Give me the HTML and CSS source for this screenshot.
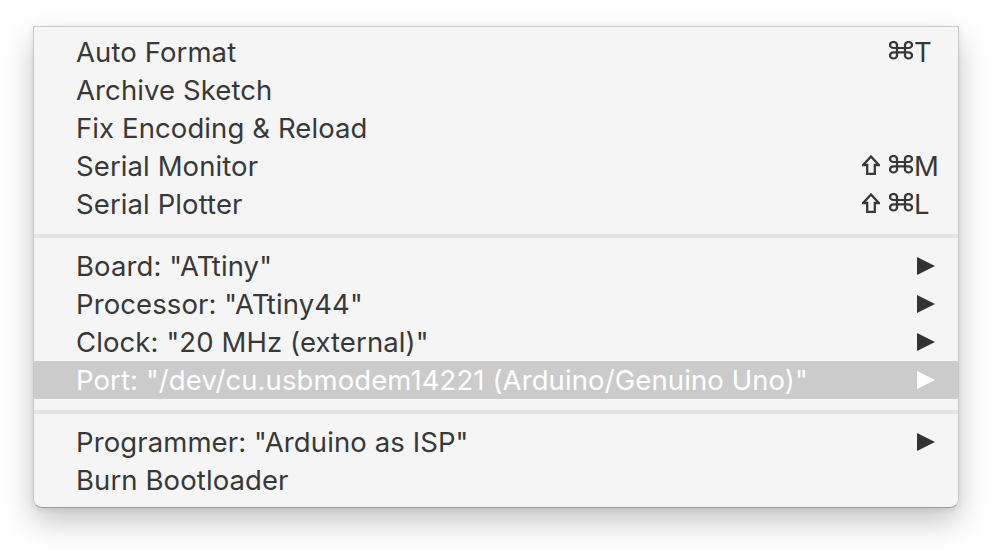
FILE: index.html
```html
<!DOCTYPE html>
<html>
<head>
<meta charset="utf-8">
<link rel="stylesheet" href="styles.css">
</head>
<body>
<div class="menu">
  <div class="group">
    <div class="item"><span class="label">Auto Format</span>
      <span class="key"><span class="mods"><svg class="cmd" viewBox="0 0 24 24" width="24" height="21" preserveAspectRatio="none"><path d="M8 8 V4.5 A3.5 3.5 0 1 0 4.5 8 H19.5 A3.5 3.5 0 1 0 16 4.5 V16.5 A3.5 3.5 0 1 0 19.5 13 H4.5 A3.5 3.5 0 1 0 8 16.5 Z" fill="none" stroke="currentColor" stroke-width="2.3"/></svg></span><span class="char">T</span></span></div>
    <div class="item"><span class="label">Archive Sketch</span></div>
    <div class="item"><span class="label">Fix Encoding &amp; Reload</span></div>
    <div class="item"><span class="label">Serial Monitor</span>
      <span class="key"><span class="mods"><svg class="shift" viewBox="0 0 18 20" width="18" height="20"><path d="M9 1.5 L16.8 10 H12.8 V18.9 H5.2 V10 H1.2 Z" fill="none" stroke="currentColor" stroke-width="2.3" stroke-linejoin="miter"/></svg><svg class="cmd" viewBox="0 0 24 24" width="24" height="21" preserveAspectRatio="none"><path d="M8 8 V4.5 A3.5 3.5 0 1 0 4.5 8 H19.5 A3.5 3.5 0 1 0 16 4.5 V16.5 A3.5 3.5 0 1 0 19.5 13 H4.5 A3.5 3.5 0 1 0 8 16.5 Z" fill="none" stroke="currentColor" stroke-width="2.3"/></svg></span><span class="char">M</span></span></div>
    <div class="item"><span class="label">Serial Plotter</span>
      <span class="key"><span class="mods"><svg class="shift" viewBox="0 0 18 20" width="18" height="20"><path d="M9 1.5 L16.8 10 H12.8 V18.9 H5.2 V10 H1.2 Z" fill="none" stroke="currentColor" stroke-width="2.3" stroke-linejoin="miter"/></svg><svg class="cmd" viewBox="0 0 24 24" width="24" height="21" preserveAspectRatio="none"><path d="M8 8 V4.5 A3.5 3.5 0 1 0 4.5 8 H19.5 A3.5 3.5 0 1 0 16 4.5 V16.5 A3.5 3.5 0 1 0 19.5 13 H4.5 A3.5 3.5 0 1 0 8 16.5 Z" fill="none" stroke="currentColor" stroke-width="2.3"/></svg></span><span class="char">L</span></span></div>
  </div>
  <div class="sep"></div>
  <div class="group">
    <div class="item"><span class="label">Board: "ATtiny"</span><span class="arrow"></span></div>
    <div class="item"><span class="label">Processor: "ATtiny44"</span><span class="arrow"></span></div>
    <div class="item"><span class="label">Clock: "20 MHz (external)"</span><span class="arrow"></span></div>
    <div class="item active"><span class="label">Port: "/dev/cu.usbmodem14221 (Arduino/Genuino Uno)"</span><span class="arrow"></span></div>
  </div>
  <div class="sep"></div>
  <div class="group">
    <div class="item"><span class="label">Programmer: "Arduino as ISP"</span><span class="arrow"></span></div>
    <div class="item"><span class="label">Burn Bootloader</span></div>
  </div>
</div>
</body>
</html>
```

FILE: styles.css
```css
html, body {
  margin: 0;
  padding: 0;
  background: #ffffff;
}
body {
  min-height: 550px;
  box-sizing: border-box;
  padding: 26px 0 0 33px;
  font-family: Inter, "Noto Sans", sans-serif;
}
.menu {
  width: 926px;
  box-sizing: border-box;
  height: 482px;
  background: #f5f5f5;
  border: 1px solid #c9c9c9;
  border-bottom-color: #9a9a9a;
  border-radius: 0 0 9px 9px;
  box-shadow: 0 14px 30px rgba(0, 0, 0, 0.22), 0 2px 6px rgba(0, 0, 0, 0.08);
  padding: 6px 0 8px 0;
}
.item {
  height: 38px;
  display: flex;
  align-items: center;
  padding: 0 21px 0 42px;
  color: #383838;
  font-size: 27.5px;
  letter-spacing: 0.1px;
}
.label {
  flex: 1;
  white-space: nowrap;
}
.key {
  display: flex;
  align-items: center;
  flex-shrink: 0;
}
.mods {
  width: 56px;
  display: flex;
  justify-content: flex-end;
  align-items: center;
  gap: 9px;
}
.mods svg {
  display: block;
}
.cmd {
  position: relative;
  top: -1px;
}
.shift {
  position: relative;
  top: -1px;
}
.char {
  width: 24px;
  padding-left: 1px;
  box-sizing: border-box;
  white-space: nowrap;
  overflow: visible;
}
.arrow {
  width: 0;
  height: 0;
  border-top: 9.5px solid transparent;
  border-bottom: 9.5px solid transparent;
  border-left: 18px solid #333333;
  margin-right: 2px;
}
.item.active {
  background: #cbcbcb;
  color: #ffffff;
}
.item.active .arrow {
  border-left-color: #ffffff;
}
.sep {
  height: 4px;
  background: #e3e3e3;
  margin: 11px 0 9px 0;
}
```
